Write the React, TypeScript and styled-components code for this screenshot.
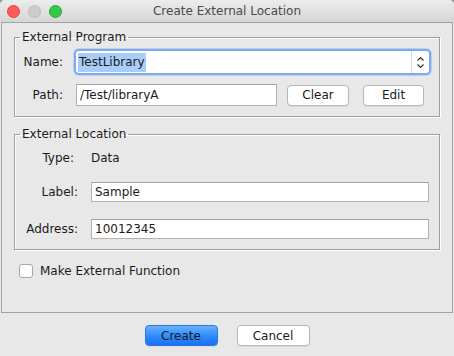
import { createGlobalStyle, styled } from "styled-components";

const GlobalStyle = createGlobalStyle`
  html, body {
    margin: 0;
    padding: 0;
    background: #8e97a4;
  }
  body {
    font-family: "DejaVu Sans", "Liberation Sans", sans-serif;
    font-size: 12px;
    color: #1b1b1b;
  }
`;

const Window = styled.div`
  display: flex;
  flex-direction: column;
  width: 454px;
  height: 356px;
  background: #e8e8e8;
  border-radius: 5px 5px 0 0;
  overflow: hidden;
`;

const TitleBar = styled.div`
  position: relative;
  display: flex;
  align-items: center;
  justify-content: center;
  height: 22px;
  background: linear-gradient(#ececec, #d6d6d6);
  font-size: 12px;
  color: #4a4a4a;
`;

const Lights = styled.div`
  position: absolute;
  left: 7px;
  top: 5px;
  display: flex;
  gap: 8px;
`;

const Light = styled.span<{ $fill: string; $edge: string }>`
  width: 11px;
  height: 11px;
  border-radius: 50%;
  background: ${(p) => p.$fill};
  border: 0.5px solid ${(p) => p.$edge};
`;

const Panel = styled.div`
  display: flex;
  flex-direction: column;
  box-sizing: border-box;
  height: 291px;
  margin: 0 1px;
  padding: 7px 12px 0 12px;
  border: 1px solid #a2a2a2;
`;

const Group = styled.fieldset`
  margin: 0;
  padding: 0 10px 10px 0;
  border: 1px solid #9e9e9e;
  box-shadow: inset 1px 1px 0 #fff, 1px 1px 0 #fff;
  min-width: 0;
`;

const Legend = styled.legend`
  margin-left: 5px;
  padding: 0 2px;
  line-height: 15px;
  font-size: 12px;
`;

const Form = styled.div<{ $label: number; $top: number; $gap: number }>`
  display: grid;
  grid-template-columns: ${(p) => p.$label}px 1fr;
  column-gap: 13px;
  row-gap: ${(p) => p.$gap}px;
  padding-top: ${(p) => p.$top}px;
  align-items: center;
`;

const Label = styled.span<{ $shift?: number }>`
  text-align: right;
  padding-right: ${(p) => p.$shift ?? 0}px;
  white-space: nowrap;
`;

const Combo = styled.div`
  display: flex;
  height: 22px;
  background: #fff;
  border-radius: 3px;
  box-shadow: 0 0 0 2px #7eabf0, 0 0 0 3px rgba(126, 171, 240, 0.4);
`;

const ComboText = styled.div`
  flex: 1;
  display: flex;
  align-items: center;
  padding-left: 2px;
`;

const Selected = styled.span`
  background: #a9cdf9;
  line-height: 19px;
  padding: 0 1px;
`;

const ComboArrow = styled.div`
  display: flex;
  align-items: center;
  justify-content: center;
  width: 17px;
  border-left: 1px solid #c4d7f3;
`;

const Field = styled.div<{ $w?: number; $h: number }>`
  display: flex;
  align-items: center;
  box-sizing: border-box;
  width: ${(p) => (p.$w ? `${p.$w}px` : "auto")};
  height: ${(p) => p.$h}px;
  padding-left: 3px;
  background: #fff;
  border: 1px solid #b2b2b2;
  border-top-color: #a4a4a4;
`;

const PathRow = styled.div`
  display: flex;
  align-items: center;
`;

const Button = styled.button<{ $w: number; $primary?: boolean }>`
  box-sizing: border-box;
  width: ${(p) => p.$w}px;
  height: 21px;
  padding: 0;
  font-family: inherit;
  font-size: 12px;
  color: #1b1b1b;
  border-radius: 4px;
  border: 1px solid ${(p) => (p.$primary ? "#2b78e4" : "#b6b6b6")};
  background: ${(p) =>
    p.$primary ? "linear-gradient(#69b1fc, #2c8cfb 55%, #1b6ff5)" : "#fff"};
  box-shadow: 0 1px 0 rgba(0, 0, 0, 0.06);
`;

const Spacer = styled.div<{ $h?: number; $w?: number }>`
  height: ${(p) => p.$h ?? 0}px;
  width: ${(p) => p.$w ?? 0}px;
  flex: none;
`;

const CheckRow = styled.label`
  display: flex;
  align-items: center;
  gap: 7px;
  margin-left: 5px;
  height: 15px;
`;

const Box = styled.span`
  box-sizing: border-box;
  width: 14px;
  height: 14px;
  background: #fff;
  border: 1px solid #a7a7a7;
  border-radius: 3px;
`;

const Footer = styled.div`
  display: flex;
  justify-content: center;
  gap: 19px;
  padding-top: 12px;
`;

function Arrows() {
  return (
    <svg width="9" height="13" viewBox="0 0 9 13">
      <path d="M1.5 4.5 L4.5 1.5 L7.5 4.5" fill="none" stroke="#333" strokeWidth="1.2" />
      <path d="M1.5 8.5 L4.5 11.5 L7.5 8.5" fill="none" stroke="#333" strokeWidth="1.2" />
    </svg>
  );
}

function App() {
  return (
    <Window>
      <GlobalStyle />
      <TitleBar>
        <Lights>
          <Light $fill="#fc5b57" $edge="#e0443e" />
          <Light $fill="#cdcdcd" $edge="#bababa" />
          <Light $fill="#35c94a" $edge="#24a932" />
        </Lights>
        Create External Location
      </TitleBar>
      <Panel>
        <Group>
          <Legend>External Program</Legend>
          <Form $label={48} $top={6} $gap={11}>
            <Label>Name:</Label>
            <Combo>
              <ComboText>
                <Selected>TestLibrary</Selected>
              </ComboText>
              <ComboArrow>
                <Arrows />
              </ComboArrow>
            </Combo>
            <Label>Path:</Label>
            <PathRow>
              <Field $w={201} $h={22}>/Test/libraryA</Field>
              <Spacer $w={10} />
              <Button $w={62}>Clear</Button>
              <Spacer $w={14} />
              <Button $w={61}>Edit</Button>
            </PathRow>
          </Form>
        </Group>
        <Spacer $h={10} />
        <Group>
          <Legend>External Location</Legend>
          <Form $label={63} $top={9} $gap={17}>
            <Label $shift={4}>Type:</Label>
            <span>Data</span>
            <Label>Label:</Label>
            <Field $h={20}>Sample</Field>
            <Label>Address:</Label>
            <Field $h={20}>10012345</Field>
          </Form>
        </Group>
        <Spacer $h={13} />
        <CheckRow>
          <Box />
          Make External Function
        </CheckRow>
      </Panel>
      <Footer>
        <Button $w={73} $primary>
          Create
        </Button>
        <Button $w={73}>Cancel</Button>
      </Footer>
    </Window>
  );
}

export default App;
